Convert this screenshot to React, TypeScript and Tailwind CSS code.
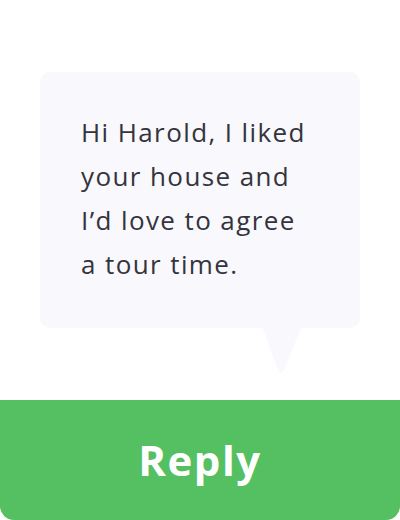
export default function App() {
  return (
    <div className="w-[400px] h-[520px] bg-white flex flex-col overflow-hidden" style={{ fontFamily: '"Open Sans", Lato, sans-serif' }}>
      {/* Message bubble */}
      <div className="flex-1 pt-[72px] px-[40px]">
        <div className="relative">
          <div className="h-[256px] rounded-[10px] bg-[#f9f8fd] pl-[41px] pt-[38px]">
            <p className="text-[26px] leading-[44px] text-[#34343c] tracking-[1.4px]">
              Hi Harold, I liked<br />
              your house and<br />
              I’d love to agree<br />
              a tour time.
            </p>
          </div>
          <svg className="absolute left-[220px] top-[254px]" width="44" height="48" viewBox="0 0 44 48">
            <path d="M2 0 L42 0 L24 44 Q21 50 18 44 Z" fill="#f9f8fd" />
          </svg>
        </div>
      </div>

      {/* Reply button */}
      <button className="h-[120px] w-full bg-[#54c062] rounded-b-[14px] flex items-center justify-center">
        <span className="text-white text-[42px] font-bold tracking-[1.5px] -mt-[2px]">Reply</span>
      </button>
    </div>
  );
}
